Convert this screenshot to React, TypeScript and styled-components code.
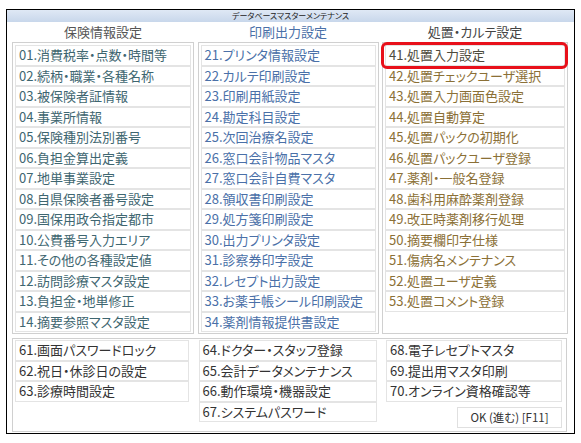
import React from 'react';
import styled, { createGlobalStyle } from 'styled-components';

const GlobalStyle = createGlobalStyle`
  html, body {
    margin: 0;
    padding: 0;
    background: #ffffff;
  }
  body {
    font-family: "Noto Sans CJK JP", "Noto Sans", sans-serif;
    font-feature-settings: "palt";
  }
`;

const Window = styled.div`
  box-sizing: border-box;
  margin: 9px 0 0 6px;
  width: 569px;
  height: 425px;
  border: 1px solid #000;
  background: #fff;
  display: flex;
  flex-direction: column;
`;

const TitleBar = styled.div`
  height: 12px;
  background: linear-gradient(#dfe8f5, #c8d7eb);
  font-size: 8px;
  line-height: 12px;
  text-align: center;
  color: #222;
`;

const Body = styled.div`
  padding: 0 7px 1px 5px;
  display: flex;
  flex-direction: column;
`;

const Columns = styled.div`
  display: grid;
  grid-template-columns: 182px 181px 186px;
  column-gap: 3.5px;
`;

const Header = styled.div<{ $color: string }>`
  height: 20px;
  line-height: 20px;
  text-align: center;
  font-size: 13px;
  color: ${(p) => p.$color};
`;

const Panel = styled.div`
  box-sizing: border-box;
  height: 292px;
  border: 1px solid #d0d0d0;
  padding: 2px;
  display: flex;
  flex-direction: column;
`;

const Item = styled.div<{ $color?: string }>`
  position: relative;
  box-sizing: border-box;
  height: 20.5px;
  flex-shrink: 0;
  border: 1px solid #e4e4e4;
  background: #fff;
  padding-left: 3px;
  font-size: 13px;
  line-height: 18px;
  white-space: nowrap;
  color: ${(p) => p.$color || '#333'};
`;

const Highlight = styled.div`
  position: absolute;
  z-index: 2;
  top: -4px;
  left: -5px;
  right: -4px;
  bottom: -4px;
  border: 3px solid #e8101a;
  border-radius: 6px;
  pointer-events: none;
`;

const BottomPanel = styled.div`
  box-sizing: border-box;
  margin-top: 4px;
  height: 94px;
  border: 1px solid #d0d0d0;
  padding: 1px 3px 2px 2px;
  display: grid;
  grid-template-columns: 174px 178px 176px;
  column-gap: 9.5px;
`;

const Stack = styled.div`
  display: flex;
  flex-direction: column;
`;

const OkButton = styled.div`
  box-sizing: border-box;
  margin: 5px 0 0 auto;
  width: 105px;
  height: 21px;
  border: 1px solid #e0e0e0;
  background: #fff;
  font-size: 11.5px;
  line-height: 19px;
  text-align: center;
  color: #333;
`;

const insurance = [
  '01.消費税率・点数・時間等',
  '02.続柄・職業・各種名称',
  '03.被保険者証情報',
  '04.事業所情報',
  '05.保険種別法別番号',
  '06.負担金算出定義',
  '07.地単事業設定',
  '08.自県保険者番号設定',
  '09.国保用政令指定都市',
  '10.公費番号入力エリア',
  '11.その他の各種設定値',
  '12.訪問診療マスタ設定',
  '13.負担金・地単修正',
  '14.摘要参照マスタ設定',
];

const printing = [
  '21.プリンタ情報設定',
  '22.カルテ印刷設定',
  '23.印刷用紙設定',
  '24.勘定科目設定',
  '25.次回治療名設定',
  '26.窓口会計物品マスタ',
  '27.窓口会計自費マスタ',
  '28.領収書印刷設定',
  '29.処方箋印刷設定',
  '30.出力プリンタ設定',
  '31.診察券印字設定',
  '32.レセプト出力設定',
  '33.お薬手帳シール印刷設定',
  '34.薬剤情報提供書設定',
];

const treatment = [
  '41.処置入力設定',
  '42.処置チェックユーザ選択',
  '43.処置入力画面色設定',
  '44.処置自動算定',
  '45.処置パックの初期化',
  '46.処置パックユーザ登録',
  '47.薬剤・一般名登録',
  '48.歯科用麻酔薬剤登録',
  '49.改正時薬剤移行処理',
  '50.摘要欄印字仕様',
  '51.傷病名メンテナンス',
  '52.処置ユーザ定義',
  '53.処置コメント登録',
];

const system1 = ['61.画面パスワードロック', '62.祝日・休診日の設定', '63.診療時間設定'];
const system2 = ['64.ドクター・スタッフ登録', '65.会計データメンテナンス', '66.動作環境・機器設定', '67.システムパスワード'];
const system3 = ['68.電子レセプトマスタ', '69.提出用マスタ印刷', '70.オンライン資格確認等'];

export default function App() {
  return (
    <>
      <GlobalStyle />
      <Window>
        <TitleBar>データベースマスターメンテナンス</TitleBar>
        <Body>
          <Columns>
            <Header $color="#555">保険情報設定</Header>
            <Header $color="#4a70a8">印刷出力設定</Header>
            <Header $color="#444">処置・カルテ設定</Header>
            <Panel>
              {insurance.map((t) => (
                <Item key={t} $color="#3e6670">{t}</Item>
              ))}
            </Panel>
            <Panel>
              {printing.map((t) => (
                <Item key={t} $color="#4a70a8">{t}</Item>
              ))}
            </Panel>
            <Panel>
              {treatment.map((t, i) => (
                <Item key={t} $color={i === 0 ? '#4d4a3c' : '#8b7036'}>
                  {t}
                  {i === 0 && <Highlight />}
                </Item>
              ))}
            </Panel>
          </Columns>
          <BottomPanel>
            <Stack>
              {system1.map((t) => (
                <Item key={t}>{t}</Item>
              ))}
            </Stack>
            <Stack>
              {system2.map((t) => (
                <Item key={t}>{t}</Item>
              ))}
            </Stack>
            <Stack>
              {system3.map((t) => (
                <Item key={t}>{t}</Item>
              ))}
              <OkButton>OK (進む) [F11]</OkButton>
            </Stack>
          </BottomPanel>
        </Body>
      </Window>
    </>
  );
}
